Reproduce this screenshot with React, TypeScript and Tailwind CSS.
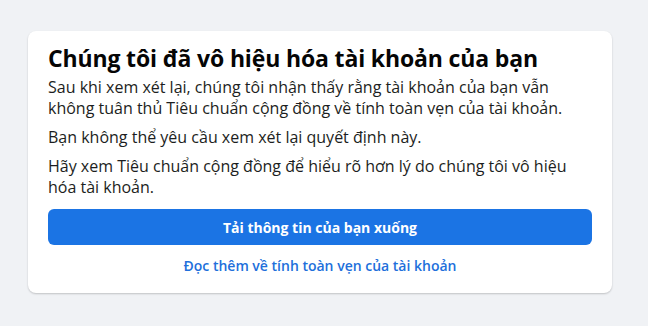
export default function App() {
  const font = { fontFamily: '"Open Sans", "Noto Sans", sans-serif' };
  return (
    <div className="w-[648px] h-[326px] bg-[#f0f2f5] pt-[31px] pl-[28px]" style={font}>
      <div className="w-[584px] bg-white rounded-[8px] shadow-[0_1px_2px_rgba(0,0,0,0.2)] px-[20px] pt-[12px] pb-[14px] h-[262px] flex flex-col">
        <h1 className="text-[23px] leading-[30px] font-bold tracking-[-0.15px] text-[#050505]">Chúng tôi đã vô hiệu hóa tài khoản của bạn</h1>
        <p className="mt-[4px] text-[16px] leading-[21px] text-[#1c1e21]">Sau khi xem xét lại, chúng tôi nhận thấy rằng tài khoản của bạn vẫn không tuân thủ Tiêu chuẩn cộng đồng về tính toàn vẹn của tài khoản.</p>
        <p className="mt-[8px] text-[16px] leading-[21px] text-[#1c1e21]">Bạn không thể yêu cầu xem xét lại quyết định này.</p>
        <p className="mt-[8px] text-[16px] leading-[21px] text-[#1c1e21]">Hãy xem Tiêu chuẩn cộng đồng để hiểu rõ hơn lý do chúng tôi vô hiệu hóa tài khoản.</p>
        <button className="mt-[11px] h-[36px] w-full rounded-[6px] bg-[#1b74e4] text-white text-[14px] font-bold">Tải thông tin của bạn xuống</button>
        <a className="mt-[10px] text-center text-[14px] font-semibold text-[#216fdb]">Đọc thêm về tính toàn vẹn của tài khoản</a>
      </div>
    </div>
  );
}
